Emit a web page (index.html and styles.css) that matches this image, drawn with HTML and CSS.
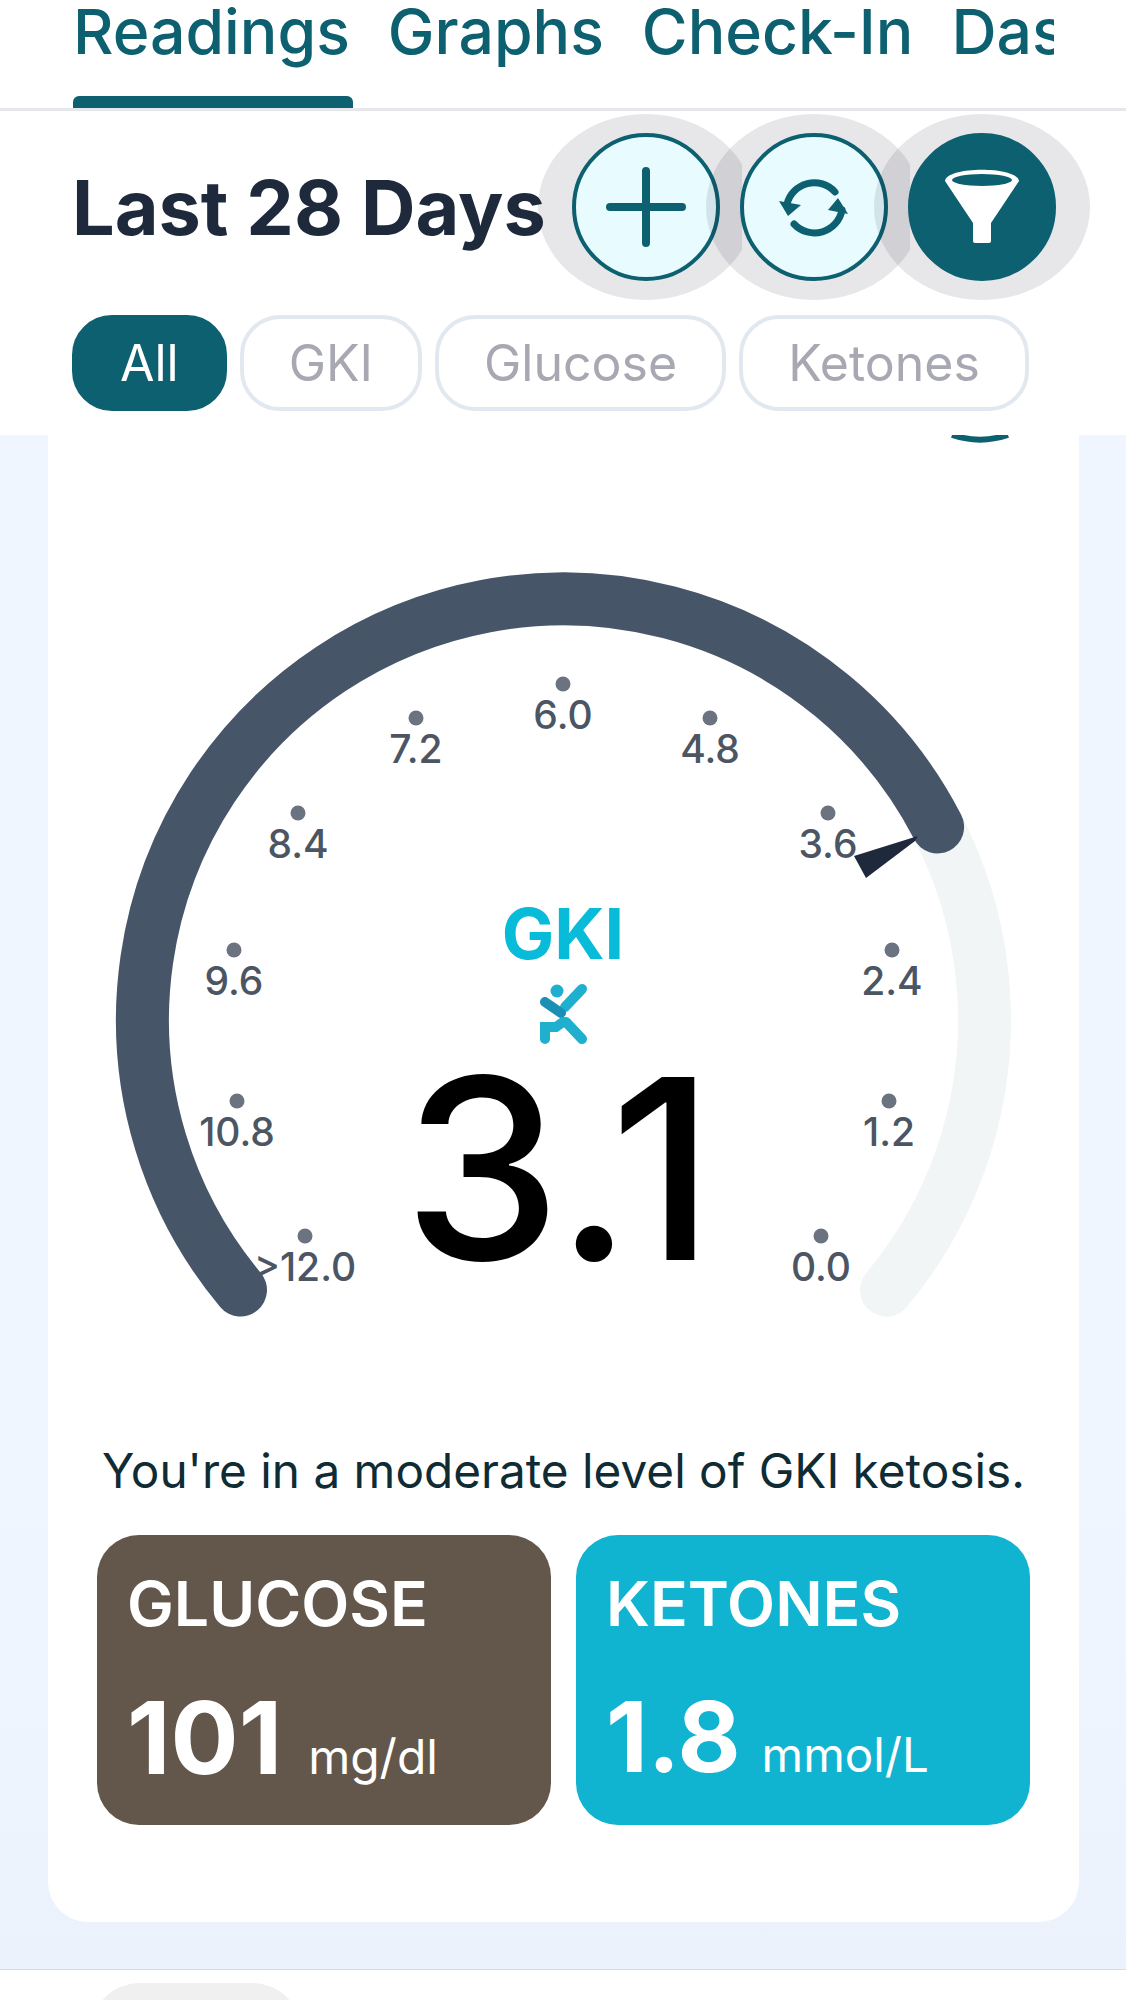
FILE: index.html
```html
<!DOCTYPE html>
<html lang="en">
<head>
  <meta charset="UTF-8" />
  <meta name="viewport" content="width=device-width, initial-scale=1.0" />
  <title>Readings</title>
  <link rel="stylesheet" href="styles.css">
</head>

<body>
  <header class="top">
    <nav class="tabs">
      <div class="tabs-inner">
        <a class="tab tab-active">Readings</a>
        <a class="tab">Graphs</a>
        <a class="tab">Check-In</a>
        <a class="tab">Dashboard</a>
      </div>
    </nav>

    <div class="title-row">
      <h1>Last 28 Days</h1>
      <div class="actions">
        <div class="action">
          <button class="round-btn">
            <svg viewBox="0 0 148 148" width="148" height="148">
              <path d="M38 74H110M74 38V110" fill="none" stroke="#0d6070" stroke-width="8" stroke-linecap="round" />
            </svg>
          </button>
        </div>
        <div class="action">
          <button class="round-btn">
            <svg viewBox="0 0 148 148" width="148" height="148">
              <path d="M47 71A28 28 0 0 1 95 59" fill="none" stroke="#0d6070" stroke-width="7" stroke-linecap="round" />
              <path d="M102 77A28 28 0 0 1 54 91" fill="none" stroke="#0d6070" stroke-width="7" stroke-linecap="round" />
              <path d="M39 68L61 72L48 83Z" fill="#0d6070" />
              <path d="M98 65L108 81L88 77Z" fill="#0d6070" />
            </svg>
          </button>
        </div>
        <div class="action action-last">
          <button class="round-btn round-btn-solid">
            <svg viewBox="0 0 148 148" width="148" height="148">
              <path d="M37 48C39 33 109 33 111 48L83 90V108Q83 110 81 110H67Q65 110 65 108V90Z" fill="#fff" />
              <ellipse cx="74" cy="47" rx="30" ry="6" fill="#0d6070" />
            </svg>
          </button>
        </div>
      </div>
    </div>

    <div class="chips">
      <span class="chip chip-active">All</span>
      <span class="chip">GKI</span>
      <span class="chip">Glucose</span>
      <span class="chip">Ketones</span>
    </div>
  </header>

  <main class="content">
    <section class="card">
      <svg class="gauge" viewBox="48 435 1031 1000" width="1031" height="1000">
        <!-- кнопка сверху, видна только нижняя часть -->
        <path d="M952 435A89 89 0 0 0 1008 435" fill="none" stroke="#0d6070" stroke-width="6" />

        <path d="M240.5 1290A421 421 0 1 1 886.5 1290" fill="none" stroke="#f1f5f6" stroke-width="53" stroke-linecap="round" />
        <path d="M240.5 1290A421 421 0 1 1 937.6 826.9" fill="none" stroke="#475569" stroke-width="53" stroke-linecap="round" />

        <g class="ticks">
          <circle cx="305" cy="1236" r="7.5" /><text x="305" y="1281">&gt;12.0</text>
          <circle cx="237" cy="1101" r="7.5" /><text x="237" y="1146">10.8</text>
          <circle cx="234" cy="950" r="7.5" /><text x="234" y="995">9.6</text>
          <circle cx="298" cy="813" r="7.5" /><text x="298" y="858">8.4</text>
          <circle cx="416" cy="718" r="7.5" /><text x="416" y="763">7.2</text>
          <circle cx="563" cy="684" r="7.5" /><text x="563" y="729">6.0</text>
          <circle cx="710" cy="718" r="7.5" /><text x="710" y="763">4.8</text>
          <circle cx="828" cy="813" r="7.5" /><text x="828" y="858">3.6</text>
          <circle cx="892" cy="950" r="7.5" /><text x="892" y="995">2.4</text>
          <circle cx="889" cy="1101" r="7.5" /><text x="889" y="1146">1.2</text>
          <circle cx="821" cy="1236" r="7.5" /><text x="821" y="1281">0.0</text>
        </g>

        <path d="M918 836L915 841L866 878L854 856Z" fill="#1e293b" />

        <text class="gauge-name" x="563" y="959">GKI</text>

        <g fill="none" stroke-linecap="round">
          <circle cx="557" cy="991" r="6.5" fill="#1fb0d0" />
          <path d="M565 1007L582 989" stroke="#1fb0d0" stroke-width="10" />
          <path d="M545 1002L561 1013" stroke="#1b90b4" stroke-width="10" />
          <path d="M545 1039V1027H556L563 1022M566 1022L582 1039" stroke="#1fb0d0" stroke-width="10" />
        </g>

        <text class="gauge-value" x="559" y="1260">3.1</text>
      </svg>

      <p class="status">You're in a moderate level of GKI ketosis.</p>

      <div class="stats">
        <div class="stat stat-glucose">
          <div class="stat-label">GLUCOSE</div>
          <div class="stat-value">101 <span>mg/dl</span></div>
        </div>
        <div class="stat stat-ketones">
          <div class="stat-label">KETONES</div>
          <div class="stat-value">1.8 <span>mmol/L</span></div>
        </div>
      </div>
    </section>
  </main>

  <footer class="bottom">
    <div class="bottom-pill"></div>
  </footer>
</body>
</html>
```

FILE: styles.css
```css
* {
  box-sizing: border-box;
  font-family: 'Inter', 'Liberation Sans', sans-serif;
}

html,
body {
  margin: 0;
  height: 2000px;
  overflow: hidden;
  background: white;
}

/* Шапка */
.top {
  height: 435px;
  background: white;
}

.tabs {
  height: 111px;
  padding: 0 72px 0 73px;
  border-bottom: 3px solid #e5e7eb;
}

.tabs-inner {
  display: flex;
  gap: 38px;
  height: 108px;
  overflow: hidden;
}

.tab {
  flex: none;
  height: 108px;
  font-size: 62.5px;
  font-weight: 500;
  line-height: 62px;
  color: #0d6070;
}

.tab-active {
  position: relative;
}

.tab-active::after {
  content: '';
  position: absolute;
  left: 0;
  right: -3px;
  bottom: 0;
  height: 12px;
  background: #0d6070;
  border-radius: 6px 6px 0 0;
}

.title-row {
  display: flex;
  align-items: center;
  justify-content: space-between;
  height: 192px;
  padding: 0 70px 0 72px;
}

.title-row h1 {
  margin: 0;
  font-size: 75.5px;
  font-weight: 700;
  color: #1e293b;
  white-space: nowrap;
}

.actions {
  display: flex;
  gap: 20px;
}

.action {
  position: relative;
  width: 148px;
  height: 148px;
}

/* серый овал за кнопкой, справа обрезан */
.action::before {
  content: '';
  position: absolute;
  top: -19px;
  bottom: -19px;
  left: -34px;
  right: -34px;
  border-radius: 50%;
  background: rgba(17, 24, 39, 0.1);
  clip-path: inset(0 12px 0 0);
}

.action-last::before {
  clip-path: none;
}

.round-btn {
  position: relative;
  width: 148px;
  height: 148px;
  padding: 0;
  border: 4px solid #0d6070;
  border-radius: 50%;
  background: #e8fbff;
  display: flex;
  align-items: center;
  justify-content: center;
}

.round-btn svg {
  flex: none;
}

.round-btn-solid {
  background: #0d6070;
}

.chips {
  display: flex;
  gap: 13px;
  padding: 12px 0 0 72px;
}

.chip {
  height: 96px;
  padding: 0 45px;
  border: 4px solid #e2e8f0;
  border-radius: 40px;
  font-size: 50px;
  line-height: 88px;
  color: #a8a8b3;
}

.chip-active {
  padding: 0 44px;
  border-color: #0d6070;
  background: #0d6070;
  color: white;
}

/* Основная часть */
.content {
  height: 1535px;
  padding: 0 47px 48px 48px;
  background: linear-gradient(#eff6ff 70%, #ebf2fc);
  border-bottom: 1px solid #d5dbe6;
}

.card {
  height: 1487px;
  background: white;
  border-radius: 0 0 40px 40px;
}

.gauge {
  display: block;
}

.ticks circle {
  fill: #6b7280;
}

.ticks text {
  font-size: 39px;
  font-weight: 500;
  fill: #4b5563;
  text-anchor: middle;
}

.gauge-name {
  font-size: 70px;
  font-weight: 700;
  fill: #08bbd8;
  text-anchor: middle;
}

.gauge-value {
  font-size: 252px;
  font-weight: 500;
  fill: black;
  text-anchor: middle;
}

.status {
  margin: 0;
  padding-top: 8px;
  font-size: 47.7px;
  line-height: 56px;
  text-align: center;
  color: #0f2b33;
  white-space: nowrap;
}

.stats {
  display: flex;
  gap: 25px;
  margin: 36px 49px 0;
}

.stat {
  flex: 1;
  height: 290px;
  padding: 32px 30px;
  border-radius: 42px;
  color: white;
}

.stat-glucose {
  background: #63574b;
}

.stat-ketones {
  background: #11b4d0;
}

.stat-label {
  font-size: 62.5px;
  font-weight: 600;
  line-height: 72px;
}

.stat-value {
  margin-top: 40px;
  font-size: 101px;
  font-weight: 700;
  line-height: 116px;
  white-space: nowrap;
}

.stat-value span {
  margin-left: 2px;
  font-size: 48px;
  font-weight: 400;
}

.stat-ketones .stat-value {
  font-size: 97px;
}

.stat-ketones .stat-value span {
  margin-left: -2px;
  font-size: 47.5px;
}

/* Низ */
.bottom {
  height: 30px;
  padding: 13px 0 0 90px;
  overflow: hidden;
}

.bottom-pill {
  width: 212px;
  height: 100px;
  border-radius: 50px;
  background: #f0f0f0;
}
```
